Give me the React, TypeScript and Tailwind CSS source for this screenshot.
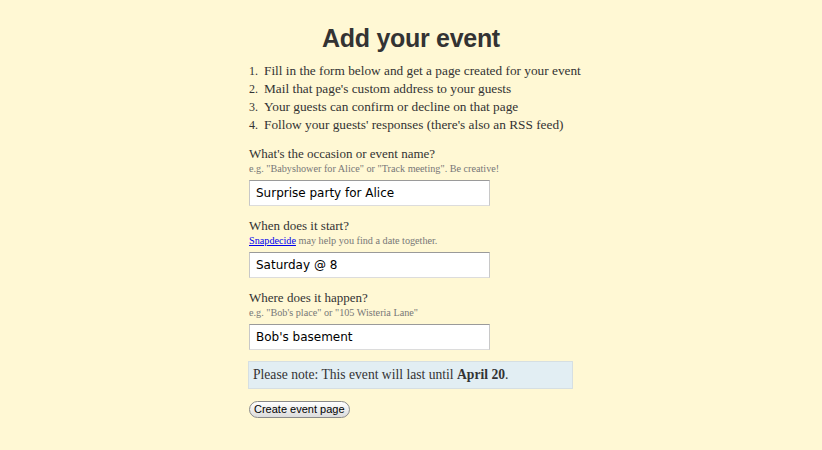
import React from "react";

const serif = { fontFamily: '"Liberation Serif", Georgia, serif' };

export default function App() {
  return (
    <div className="min-h-[450px] w-full bg-[#fff8d4] text-[#333]" style={serif}>
      <div className="mx-auto w-[324px] pt-[23px]">
        <h1
          className="text-center text-[25px] font-bold leading-[31px] text-[#333] tracking-[-0.3px]"
          style={{ fontFamily: '"Liberation Sans", Arial, sans-serif' }}
        >
          Add your event
        </h1>
        <ol className="mt-[8px] text-[13.3px] leading-[18px] text-[#333]">
          {[
            "Fill in the form below and get a page created for your event",
            "Mail that page's custom address to your guests",
            "Your guests can confirm or decline on that page",
            "Follow your guests' responses (there's also an RSS feed)",
          ].map((t, i) => (
            <li key={i} className="flex whitespace-nowrap">
              <span className="w-[15px] shrink-0 text-[12px]">{i + 1}.</span>
              <span>{t}</span>
            </li>
          ))}
        </ol>

        <Field
          label="What's the occasion or event name?"
          hint={<>e.g. "Babyshower for Alice" or "Track meeting". Be creative!</>}
          value="Surprise party for Alice"
          mt="mt-[11px]"
        />
        <Field
          label="When does it start?"
          hint={
            <>
              <a href="#" className="text-[#0000ee] underline">
                Snapdecide
              </a>{" "}
              may help you find a date together.
            </>
          }
          value="Saturday @ 8"
          mt="mt-[11px]"
        />
        <Field
          label="Where does it happen?"
          hint={<>e.g. "Bob's place" or "105 Wisteria Lane"</>}
          value="Bob's basement"
          mt="mt-[11px]"
        />

        <div className="mt-[11px] -ml-px border border-[#d6dfe2] bg-[#e2eef3] px-[4px] py-[5px] text-[13.6px] leading-[16px] text-[#333]">
          Please note: This event will last until <b>April 20</b>.
        </div>

        <button
          className="mt-[12px] h-[17px] rounded-full border border-[#8a8a8a] bg-gradient-to-b from-[#ffffff] to-[#dcdcdc] px-[4px] text-[11px] leading-[15px] text-black"
          style={{ fontFamily: '"Liberation Sans", "Lucida Grande", sans-serif' }}
        >
          Create event page
        </button>
      </div>
    </div>
  );
}

function Field({
  label,
  hint,
  value,
  mt,
}: {
  label: string;
  hint: React.ReactNode;
  value: string;
  mt: string;
}) {
  return (
    <div className={mt}>
      <div className="text-[13px] leading-[17px] text-[#333]">{label}</div>
      <div className="text-[10.2px] leading-[13px] text-[#777]">{hint}</div>
      <input
        readOnly
        value={value}
        className="mt-[5px] block h-[26px] w-[241px] border border-t-[#9a9a9a] border-x-[#c8c8c8] border-b-[#dcdcdc] bg-white px-[6px] text-[12px] text-black outline-none"
        style={{ fontFamily: '"DejaVu Sans", "Lucida Grande", sans-serif' }}
      />
    </div>
  );
}
